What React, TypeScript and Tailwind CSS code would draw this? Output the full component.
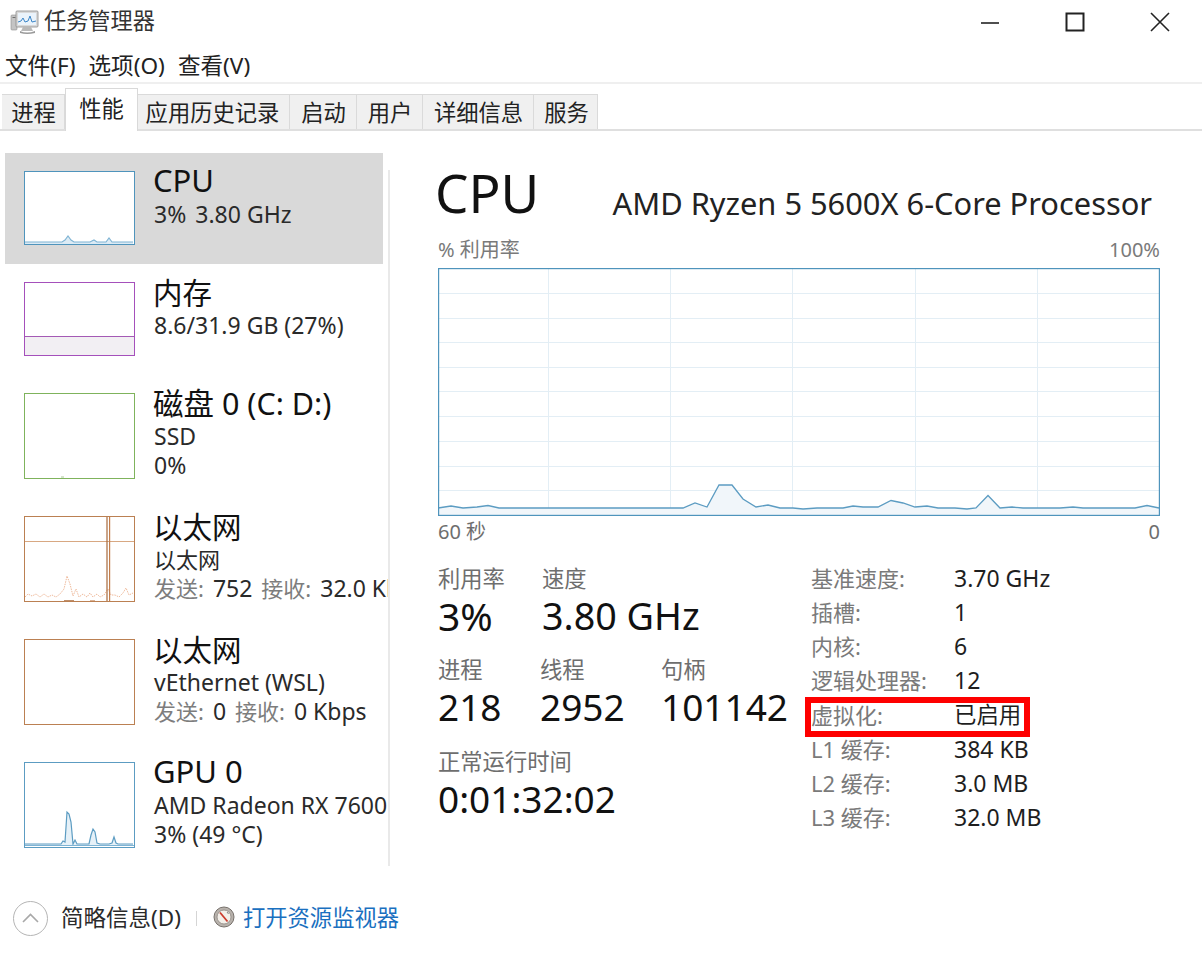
const cpuPts: [number, number][] = [[0,240],[13,238],[25,240],[39,239],[50,237.5],[61,240],[245,240],[257,235],[269,239],[281,217],[294,217],[305,231],[318,239],[330,237],[342,240],[355,240],[365,241],[379,240],[405,240],[415,238],[425,239],[440,239],[453,232.5],[465,235],[477,239],[489,238],[500,240],[517,240],[529,241],[538,240],[550,227.5],[562,240],[574,239],[585,240],[622,240],[635,239],[645,240],[697,240],[709,237.5],[721,240]];

function BigChart() {
  const line = cpuPts.map(p => p.join(",")).join(" ");
  return (
    <svg width="722" height="248" viewBox="0 0 722 248" className="block">
      <rect x="0" y="0" width="722" height="248" fill="#ffffff" />
      {[25, 50, 74, 99, 123, 148, 173, 198, 222].map(y => (
        <line key={y} x1="1" x2="721" y1={y + 0.5} y2={y + 0.5} stroke="#e3eef5" strokeWidth="1" />
      ))}
      {[110, 232, 354, 477, 599].map(x => (
        <line key={x} x1={x + 0.5} x2={x + 0.5} y1="1" y2="247" stroke="#e3eef5" strokeWidth="1" />
      ))}
      <polygon points={`${line} 721,247 0,247`} fill="#f1f6fa" />
      <polyline points={line} fill="none" stroke="#5c9cc2" strokeWidth="1.3" />
      <rect x="0.5" y="0.5" width="721" height="247" fill="none" stroke="#4f94bc" strokeWidth="1.4" />
    </svg>
  );
}

function MiniCpu() {
  const pts = "1,71 38,71 41,69 44,65 47,69 50,71 66,71 70,69 73,71 82,71 85,67 88,71 109,71";
  return (
    <svg width="111" height="74" viewBox="0 0 111 74" className="block">
      <rect x="0" y="0" width="111" height="74" fill="#ffffff" />
      <polygon points={`${pts} 109,73 1,73`} fill="#dcebf5" />
      <polyline points={pts} fill="none" stroke="#7fb4d4" strokeWidth="1.1" />
      <rect x="0.5" y="0.5" width="110" height="73" fill="none" stroke="#4f94bc" />
    </svg>
  );
}

function MiniMem() {
  return (
    <svg width="111" height="74" viewBox="0 0 111 74" className="block">
      <rect x="1" y="54" width="109" height="19" fill="#f2eff3" />
      <line x1="0" x2="111" y1="54.5" y2="54.5" stroke="#a45ab5" />
      <rect x="0.5" y="0.5" width="110" height="73" fill="none" stroke="#a550bb" />
    </svg>
  );
}

function MiniDisk() {
  return (
    <svg width="111" height="86" viewBox="0 0 111 86" className="block">
      <line x1="37" x2="40" y1="84" y2="84" stroke="#a8c897" />
      <rect x="0.5" y="0.5" width="110" height="85" fill="none" stroke="#7fb35c" />
    </svg>
  );
}

function MiniEth() {
  const pts = "1,81 4,78 8,80 12,78 16,81 20,78 24,81 28,79 32,81 36,78 40,73 43,60 46,68 49,80 52,73 55,81 59,78 63,81 66,77 69,81 73,78 76,81 80,79 84,73 87,79 91,79 95,81 99,77 102,72 105,79 109,77";
  return (
    <svg width="111" height="86" viewBox="0 0 111 86" className="block">
      <polyline points={pts} fill="none" stroke="#efb99a" strokeWidth="1" strokeDasharray="1.5 1" />
      <line x1="0" x2="111" y1="25.5" y2="25.5" stroke="#d8a882" />
      <line x1="83" x2="83" y1="0" y2="86" stroke="#a8683a" strokeWidth="1.2" />
      <line x1="85.6" x2="85.6" y1="0" y2="86" stroke="#c27e4d" strokeWidth="1.2" />
      <line x1="40" x2="50" y1="85" y2="85" stroke="#a8683a" strokeWidth="1.5" />
      <line x1="66" x2="71" y1="85" y2="85" stroke="#c27e4d" strokeWidth="1.2" />
      <rect x="0.5" y="0.5" width="110" height="85" fill="none" stroke="#bb8052" />
    </svg>
  );
}

function MiniEmptyEth() {
  return (
    <svg width="111" height="86" viewBox="0 0 111 86" className="block">
      <rect x="0.5" y="0.5" width="110" height="85" fill="none" stroke="#bb8052" />
    </svg>
  );
}

function MiniGpu() {
  const pts = "1,82 37,82 39,79 41,80 43,50 45,52 47,60 49,82 51,78 53,82 65,82 67,73 69,67 71,70 73,81 76,82 85,82 88,81 90,75 92,81 94,82 109,82";
  return (
    <svg width="111" height="86" viewBox="0 0 111 86" className="block">
      <polygon points={`${pts} 109,84 1,84`} fill="#e6f1f8" />
      <polyline points={pts} fill="none" stroke="#5c9cc2" strokeWidth="1.2" />
      <line x1="0" x2="111" y1="83.5" y2="83.5" stroke="#7fb4d4" />
      <rect x="0.5" y="0.5" width="110" height="85" fill="none" stroke="#5c9cc2" />
    </svg>
  );
}

function AppIcon() {
  return (
    <svg width="30" height="28" viewBox="0 0 30 28" className="block">
      <rect x="1" y="7" width="6" height="15" rx="1" fill="#c4c4c4" stroke="#8f8f8f" strokeWidth="0.6" />
      <rect x="2.5" y="9" width="3" height="1" fill="#707070" />
      <rect x="6" y="3" width="22" height="16" rx="1" fill="#d9d9d9" stroke="#8c8c8c" strokeWidth="0.8" />
      <rect x="8" y="5" width="18" height="12" fill="#eaf3fb" />
      <polyline points="8,14 11,13 13,10 15,14 18,13 20,8 22,14 26,13" fill="none" stroke="#3c86c8" strokeWidth="1" />
      <path d="M13 19 h8 l2 4 h-12 z" fill="#b9b9b9" />
      <path d="M10 23 q7 3 15 0 v2 q-8 2 -15 0 z" fill="#9a9a9a" />
    </svg>
  );
}

function MonitorIcon() {
  return (
    <svg width="22" height="22" viewBox="0 0 22 22" className="block">
      <circle cx="11" cy="11" r="10" fill="#b8b2ac" stroke="#77716c" strokeWidth="1" />
      <circle cx="11" cy="11" r="7" fill="#f3efe9" stroke="#8b8580" strokeWidth="0.8" />
      <line x1="7" y1="6.5" x2="14.5" y2="15.5" stroke="#cc3a2c" strokeWidth="1.8" />
      <line x1="14" y1="6" x2="15.5" y2="8" stroke="#888888" strokeWidth="1" />
    </svg>
  );
}

type Item = { graph: React.ReactNode; title: string; size: string; lines: React.ReactNode[]; selected?: boolean };

const G = ({ children }: { children: React.ReactNode }) => <span className="text-[22px] text-[#7d7d7d]">{children}</span>;

const items: Item[] = [
  { graph: <MiniCpu />, title: "CPU", size: "text-[31px] leading-[32px]", lines: [<>3%<span className="ml-[9px]">3.80 GHz</span></>], selected: true },
  { graph: <MiniMem />, title: "内存", size: "text-[29.5px] leading-[36px]", lines: ["8.6/31.9 GB (27%)"] },
  { graph: <MiniDisk />, title: "磁盘 0 (C: D:)", size: "text-[30.5px] leading-[35px]", lines: ["SSD", "0%"] },
  { graph: <MiniEth />, title: "以太网", size: "text-[29.5px] leading-[36px]", lines: [<span className="text-[22px]">以太网</span>, <span className="[word-spacing:3px]"><G>发送:</G> 752 <G>接收:</G> <span className="[word-spacing:0px]">32.0 Kbps</span></span>] },
  { graph: <MiniEmptyEth />, title: "以太网", size: "text-[29.5px] leading-[36px]", lines: ["vEthernet (WSL)", <span className="[word-spacing:3px]"><G>发送:</G> 0 <G>接收:</G> <span className="[word-spacing:0px]">0 Kbps</span></span>] },
  { graph: <MiniGpu />, title: "GPU 0", size: "text-[31px] leading-[32px]", lines: ["AMD Radeon RX 7600", "3% (49 °C)"] },
];

const tabs = [
  { t: "进程", w: "w-[63px]", pad: "pl-[1px]" },
  { t: "性能", w: "w-[73px]", active: true, pad: "" },
  { t: "应用历史记录", w: "w-[152px]", pad: "pr-[2px]" },
  { t: "启动", w: "w-[67px]", pad: "pl-[1px]" },
  { t: "用户", w: "w-[66px]", pad: "pl-[1px]" },
  { t: "详细信息", w: "w-[111px]", pad: "pl-[1px]" },
  { t: "服务", w: "w-[64px]", pad: "pl-[2px]" },
];

const specs = [
  ["基准速度:", "3.70 GHz"],
  ["插槽:", "1"],
  ["内核:", "6"],
  ["逻辑处理器:", "12"],
  ["虚拟化:", "已启用"],
  ["L1 缓存:", "384 KB"],
  ["L2 缓存:", "3.0 MB"],
  ["L3 缓存:", "32.0 MB"],
];

function Stat({ label, value, w, size = "text-[37px]" }: { label: string; value: string; w: string; size?: string }) {
  return (
    <div className={`${w} whitespace-nowrap`}>
      <div className="h-[29px] text-[22.3px] leading-[30px] text-[#6e6e6e]">{label}</div>
      <div className={`h-[46px] ${size} leading-[46px] text-[#111111]`}>{value}</div>
    </div>
  );
}

export default function App() {
  return (
    <div
      className="relative h-[958px] w-[1202px] overflow-hidden bg-white text-[#1a1a1a]"
      style={{ fontFamily: '"Noto Sans", "Noto Sans CJK SC", sans-serif' }}
    >
      {/* title bar */}
      <div className="flex h-[44px] items-center">
        <div className="ml-[10px] mr-[4px]"><AppIcon /></div>
        <div className="-mt-[2px] text-[22.2px] leading-[44px] text-[#333333]">任务管理器</div>
        <div className="-mt-[1px] ml-auto flex">
          <div className="flex h-[44px] w-[85px] items-center justify-center">
            <svg width="20" height="20" viewBox="0 0 20 20"><line x1="1" x2="19" y1="11" y2="11" stroke="#222222" strokeWidth="1.6" /></svg>
          </div>
          <div className="flex h-[44px] w-[85px] items-center justify-center">
            <svg width="20" height="20" viewBox="0 0 20 20"><rect x="1.5" y="1.5" width="17" height="17" fill="none" stroke="#222222" strokeWidth="2" /></svg>
          </div>
          <div className="flex h-[44px] w-[85px] items-center justify-center">
            <svg width="20" height="20" viewBox="0 0 20 20"><path d="M1 1 L19 19 M19 1 L1 19" stroke="#222222" strokeWidth="1.6" /></svg>
          </div>
        </div>
      </div>
      {/* menu */}
      <div className="flex h-[40px] items-center gap-[13px] border-b-2 border-[#efefef] pl-[5px] pt-[5px] text-[22.6px] leading-[33px] text-[#222222]">
        <span>文件(F)</span>
        <span>选项(O)</span>
        <span>查看(V)</span>
      </div>
      {/* tabs */}
      <div className="flex h-[47px] items-end border-b-2 border-[#dfdfdf] pl-[2px]">
        {tabs.map(t => (
          <div
            key={t.t}
            className={
              t.active
                ? `${t.w} relative -mb-[2px] flex h-[43px] items-center justify-center border border-b-0 border-[#d9d9d9] bg-white pb-[3px] text-[22.3px] text-[#222222]`
                : `${t.w} ${t.pad} flex h-[35px] items-center justify-center border-r border-t border-[#dadada] bg-[#f0f0f0] pt-[1px] text-[22.3px] text-[#222222]`
            }
          >
            {t.t}
          </div>
        ))}
      </div>
      {/* content */}
      <div className="flex h-[767px]">
        <div className="flex h-[735px] w-[391px] flex-none pt-[22px]">
          <div className="h-[714px] w-[388px] flex-none overflow-hidden">
            {items.map((it, i) => (
              <div
                key={i}
                className={`ml-[5px] flex w-[378px] pb-[19px] pl-[19px] pt-[18px] whitespace-nowrap ${it.selected ? "bg-[#d9d9d9]" : ""}`}
              >
                <div className="flex-none">{it.graph}</div>
                <div className="ml-[19px] h-[60px] w-[240px] flex-none">
                  <div className={`-ml-[1px] -mt-[7px] h-[36px] ${it.size} text-[#111111]`}>{it.title}</div>
                  {it.lines.map((l, j) => (
                    <div key={j} className="text-[23px] leading-[29px] text-[#2a2a2a]">{l}</div>
                  ))}
                </div>
              </div>
            ))}
          </div>
          <div className="mt-[17px] h-[696px] w-[2px] flex-none bg-[#e9e9e9]" />
        </div>
        {/* main pane */}
        <div className="ml-[47px] w-[722px] flex-none pt-[27px]">
          <div className="flex h-[76px] items-start justify-between">
            <div className="-ml-[3px] text-[53px] leading-[70px] text-[#111111]">CPU</div>
            <div className="mr-[8px] mt-[25px] text-[30.8px] leading-[40px] text-[#222222]">AMD Ryzen 5 5600X 6-Core Processor</div>
          </div>
          <div className="flex h-[34px] items-center justify-between pb-[2px] text-[20px] text-[#7a7a7a]">
            <span>% 利用率</span>
            <span>100%</span>
          </div>
          <BigChart />
          <div className="flex h-[34px] items-center justify-between pb-[2px] text-[20px] text-[#6e6e6e]">
            <span>60 秒</span>
            <span>0</span>
          </div>
          <div className="flex pt-[14px]">
            <div className="w-[373px] flex-none">
              <div className="flex h-[91px]">
                <Stat label="利用率" value="3%" w="w-[104px]" size="text-[39px]" />
                <Stat label="速度" value="3.80 GHz" w="w-[200px]" size="text-[37.7px]" />
              </div>
              <div className="flex h-[92px]">
                <Stat label="进程" value="218" w="w-[102px]" />
                <Stat label="线程" value="2952" w="w-[121px]" />
                <Stat label="句柄" value="101142" w="w-[140px]" />
              </div>
              <Stat label="正常运行时间" value="0:01:32:02" w="w-[300px]" />
            </div>
            <div className="-mt-[3px] grid w-[349px] flex-none auto-rows-[34.15px] grid-cols-[143px_1fr] items-center leading-[34px]">
              {specs.map(([k, v]) => (
                <div key={k} className="contents">
                  <div className="text-[22px] text-[#7a7a7a]">{k}</div>
                  <div className={`${v === "已启用" ? "text-[22.4px]" : "text-[23px]"} text-[#1e1e1e]`}>{v}</div>
                </div>
              ))}
            </div>
          </div>
        </div>
      </div>
      {/* footer */}
      <div className="flex h-[40px] items-center pl-[13px]">
        <div className="flex h-[35px] w-[35px] flex-none items-center justify-center rounded-full border border-[#b5b5b5]">
          <svg width="17" height="10" viewBox="0 0 17 10"><polyline points="1,9 8.5,1.5 16,9" fill="none" stroke="#a8a8a8" strokeWidth="1.6" /></svg>
        </div>
        <div className="ml-[13px] text-[22.5px] text-[#2a2a2a]">简略信息(D)</div>
        <div className="ml-[15px] h-[15px] w-[1px] bg-[#d5d5d5]" />
        <div className="ml-[16px] -mt-[3px]"><MonitorIcon /></div>
        <div className="ml-[8px] text-[22.3px] text-[#1a70c0]">打开资源监视器</div>
      </div>
      {/* annotation */}
      <div className="absolute left-[805px] top-[697px] h-[40px] w-[225px] border-[6px] border-[#fe0000]" />
    </div>
  );
}
